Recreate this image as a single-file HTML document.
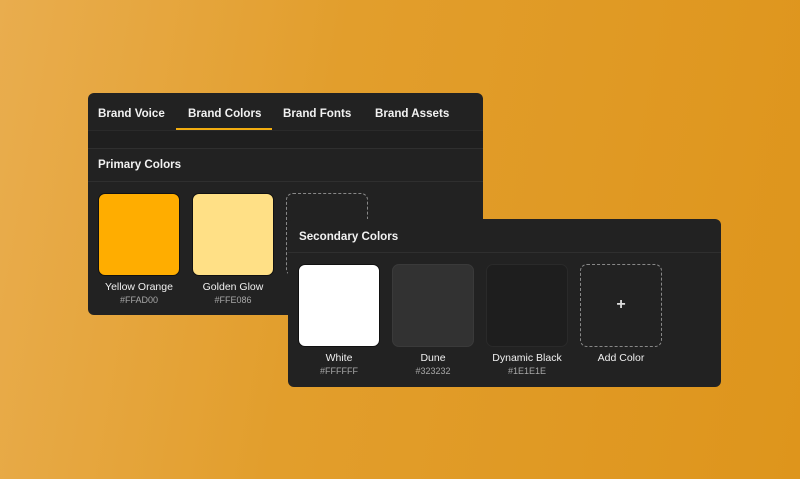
<!DOCTYPE html>
<html><head><style>
*{margin:0;padding:0;box-sizing:border-box}
body{width:800px;height:479px;overflow:hidden;background:linear-gradient(100deg,#e9ad4e 0%,#e29e2c 40%,#de951c 100%);font-family:"Liberation Sans",sans-serif;position:relative}
.p{position:absolute;background:#222222;border-radius:6px}
.t{position:absolute;color:#f2f2f2;font-size:11.6px;font-weight:bold;white-space:nowrap}
.l{position:absolute;height:1px;background:#2f2f2f}
.sw{position:absolute;width:82px;height:83px;border-radius:7px}
.n{position:absolute;width:100px;text-align:center;color:#f0f0f0;font-size:10.5px}
.h{position:absolute;width:100px;text-align:center;color:#a8a8a8;font-size:9px}
</style></head><body>
<div class="p" style="left:88px;top:93px;width:395px;height:222px">
  <div class="t" style="left:10px;top:14px">Brand Voice</div>
  <div class="t" style="left:100px;top:14px">Brand Colors</div>
  <div class="t" style="left:195px;top:14px">Brand Fonts</div>
  <div class="t" style="left:287px;top:14px">Brand Assets</div>
  <div style="position:absolute;left:88px;top:35px;width:96px;height:2px;background:#f2ad10"></div>
  <div class="l" style="left:0;top:37px;width:395px;background:#2a2a2a"></div>
  <div style="position:absolute;left:0;top:38px;width:395px;height:17px;background:#1f1f1f"></div>
  <div class="l" style="left:0;top:55px;width:395px"></div>
  <div class="t" style="left:10px;top:65px">Primary Colors</div>
  <div class="l" style="left:0;top:88px;width:395px"></div>
  <div class="sw" style="left:10px;top:100px;background:#ffad00;border:1px solid #111"></div>
  <div class="sw" style="left:104px;top:100px;background:#ffe086;border:1px solid #111"></div>
  <div class="sw" style="left:198px;top:100px;border:1px dashed #888"></div>
  <div class="n" style="left:1px;top:188px">Yellow Orange</div>
  <div class="h" style="left:1px;top:202px">#FFAD00</div>
  <div class="n" style="left:95px;top:188px">Golden Glow</div>
  <div class="h" style="left:95px;top:202px">#FFE086</div>
</div>
<div class="p" style="left:288px;top:219px;width:433px;height:168px">
  <div class="t" style="left:11px;top:11px">Secondary Colors</div>
  <div class="l" style="left:0;top:33px;width:433px"></div>
  <div class="sw" style="left:10px;top:45px;background:#fff;border:1px solid #111"></div>
  <div class="sw" style="left:104px;top:45px;background:#323232;border:1px solid #3a3a3a"></div>
  <div class="sw" style="left:198px;top:45px;background:#1e1e1e;border:1px solid #2a2a2a"></div>
  <div class="sw" style="left:292px;top:45px;border:1px dashed #888;color:#ddd;font-size:16px;font-weight:bold;text-align:center;line-height:80px">+</div>
  <div class="n" style="left:1px;top:133px">White</div>
  <div class="h" style="left:1px;top:147px">#FFFFFF</div>
  <div class="n" style="left:95px;top:133px">Dune</div>
  <div class="h" style="left:95px;top:147px">#323232</div>
  <div class="n" style="left:189px;top:133px">Dynamic Black</div>
  <div class="h" style="left:189px;top:147px">#1E1E1E</div>
  <div class="n" style="left:283px;top:133px">Add Color</div>
</div>
</body></html>
